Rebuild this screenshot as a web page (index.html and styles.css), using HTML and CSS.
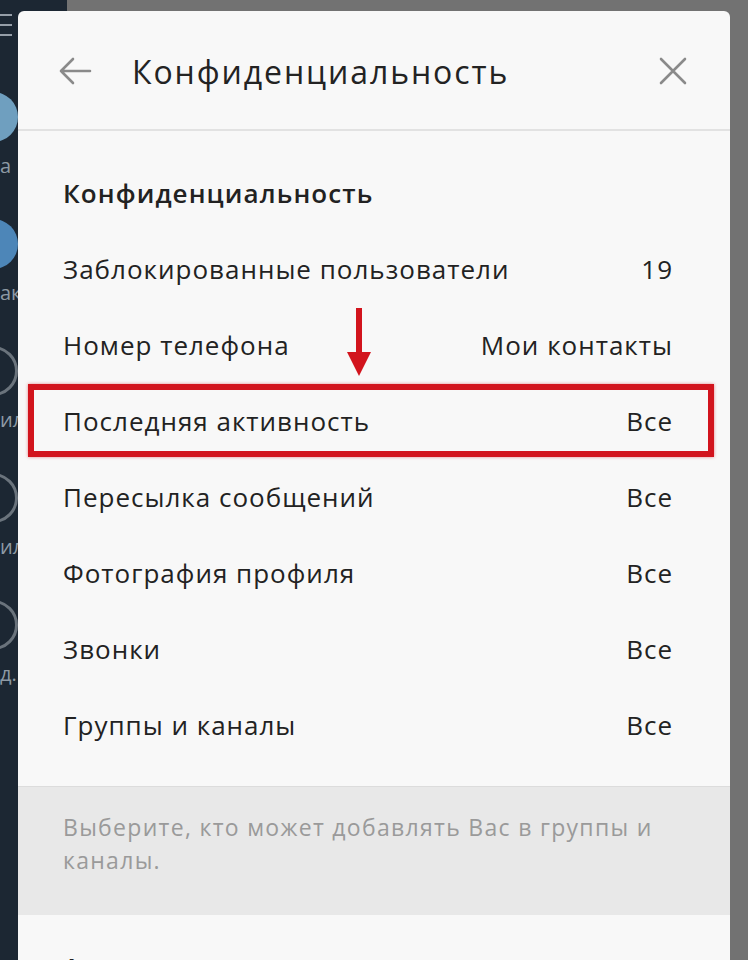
FILE: index.html
```html
<!DOCTYPE html>
<html lang="ru">
<head>
    <meta charset="UTF-8">
    <meta name="viewport" content="width=device-width, initial-scale=1.0">
    <title>Конфиденциальность</title>
    <link rel="stylesheet" href="styles.css">
</head>
<body>

<div class="app">
    <div class="sidebar">
        <div class="menu-lines">
            <span></span><span></span><span></span>
        </div>
        <div class="chat"><div class="avatar light"></div><div class="chat-name">а</div></div>
        <div class="chat"><div class="avatar blue"></div><div class="chat-name">ак</div></div>
        <div class="chat"><div class="avatar ring"></div><div class="chat-name">ил</div></div>
        <div class="chat"><div class="avatar ring"></div><div class="chat-name">ил</div></div>
        <div class="chat"><div class="avatar ring"></div><div class="chat-name">д.</div></div>
    </div>
    <div class="main"></div>
</div>

<div class="overlay">
    <div class="dialog">
        <div class="dialog-header">
            <button class="icon-button back" aria-label="Назад">
                <svg width="34" height="30" viewBox="0 0 34 30">
                    <path d="M32 15H3M15 3L3 15l12 12" fill="none" stroke="#8a8a8a" stroke-width="2.6" stroke-linecap="round" stroke-linejoin="round"/>
                </svg>
            </button>
            <div class="dialog-title">Конфиденциальность</div>
            <button class="icon-button close" aria-label="Закрыть">
                <svg width="28" height="28" viewBox="0 0 28 28">
                    <path d="M2 2L26 26M26 2L2 26" fill="none" stroke="#8a8a8a" stroke-width="2.6" stroke-linecap="round"/>
                </svg>
            </button>
        </div>

        <div class="section">
            <div class="section-title">Конфиденциальность</div>

            <div class="row"><span>Заблокированные пользователи</span><span class="value">19</span></div>
            <div class="row"><span>Номер телефона</span><span class="value">Мои контакты</span>
                <div class="arrow"></div>
            </div>
            <div class="row highlighted"><span>Последняя активность</span><span class="value">Все</span></div>
            <div class="row"><span>Пересылка сообщений</span><span class="value">Все</span></div>
            <div class="row"><span>Фотография профиля</span><span class="value">Все</span></div>
            <div class="row"><span>Звонки</span><span class="value">Все</span></div>
            <div class="row"><span>Группы и каналы</span><span class="value">Все</span></div>
        </div>

        <div class="hint">Выберите, кто может добавлять Вас в группы и каналы.</div>

        <div class="section next">
            <div class="section-title">Активные сеансы</div>
        </div>
    </div>
</div>

</body>
</html>
```

FILE: styles.css
```css
* {
    box-sizing: border-box;
}

body {
    margin: 0;
    font-family: 'Open Sans', 'Noto Sans', sans-serif;
    color: #222222;
    overflow: hidden;
    height: 960px;
}

.app {
    display: flex;
    height: 960px;
}

.sidebar {
    width: 67px;
    background: #1c2733;
    padding-top: 14px;
    overflow: hidden;
}

.menu-lines {
    display: flex;
    flex-direction: column;
    gap: 8px;
    margin-bottom: 56px;
}

.menu-lines span {
    display: block;
    width: 12px;
    height: 2px;
    background: #c9d2da;
    opacity: 0.7;
}

.chat {
    display: flex;
    flex-direction: column;
    margin-bottom: 40px;
}

.avatar {
    width: 50px;
    height: 50px;
    border-radius: 50%;
    margin-left: -32px;
}

.avatar.light {
    background: #6f9fbf;
}

.avatar.blue {
    background: #4d86b8;
}

.avatar.ring {
    border: 3px solid #6a737c;
}

.chat-name {
    color: #8e9aa5;
    font-size: 20px;
    margin-top: 10px;
}

.main {
    flex: 1;
    background: #727272;
}

.overlay {
    position: fixed;
    inset: 0;
    padding: 11px 18px 0 18px;
}

.dialog {
    background: #f8f8f8;
    border-radius: 6px 6px 0 0;
    height: 100%;
    overflow: hidden;
}

.dialog-header {
    display: flex;
    align-items: center;
    height: 120px;
    padding: 2px 43px 0 40px;
    border-bottom: 2px solid #e2e2e2;
}

.icon-button {
    background: none;
    border: none;
    padding: 0;
    display: flex;
    cursor: pointer;
}

.dialog-title {
    flex: 1;
    margin-left: 40px;
    font-size: 32px;
    letter-spacing: 1.9px;
    color: #232323;
}

.section {
    padding: 44px 57px 0 45px;
}

.section.next {
    padding-top: 34px;
}

.section-title {
    font-size: 26px;
    font-weight: 600;
    letter-spacing: 1.1px;
    line-height: 36px;
    margin-bottom: 20px;
}

.row {
    position: relative;
    display: flex;
    justify-content: space-between;
    align-items: center;
    height: 76px;
    font-size: 26px;
    letter-spacing: 1px;
}

.highlighted::after {
    content: '';
    position: absolute;
    left: -35px;
    right: -41px;
    top: 1px;
    bottom: 2px;
    border: 6px solid #d2141d;
    box-shadow: 0 0 3px rgba(210, 20, 29, 0.5);
}

.arrow {
    position: absolute;
    left: 293px;
    top: 1px;
    width: 6px;
    height: 46px;
    background: #d2141d;
}

.arrow::after {
    content: '';
    position: absolute;
    left: -9px;
    bottom: -22px;
    border-left: 12px solid transparent;
    border-right: 12px solid transparent;
    border-top: 24px solid #d2141d;
}

.hint {
    margin-top: 23px;
    background: #e8e8e8;
    border-top: 1px solid #dcdcdc;
    padding: 24px 57px 38px 45px;
    font-size: 23px;
    letter-spacing: 1.3px;
    line-height: 33px;
    color: #9a9a9a;
}
```
